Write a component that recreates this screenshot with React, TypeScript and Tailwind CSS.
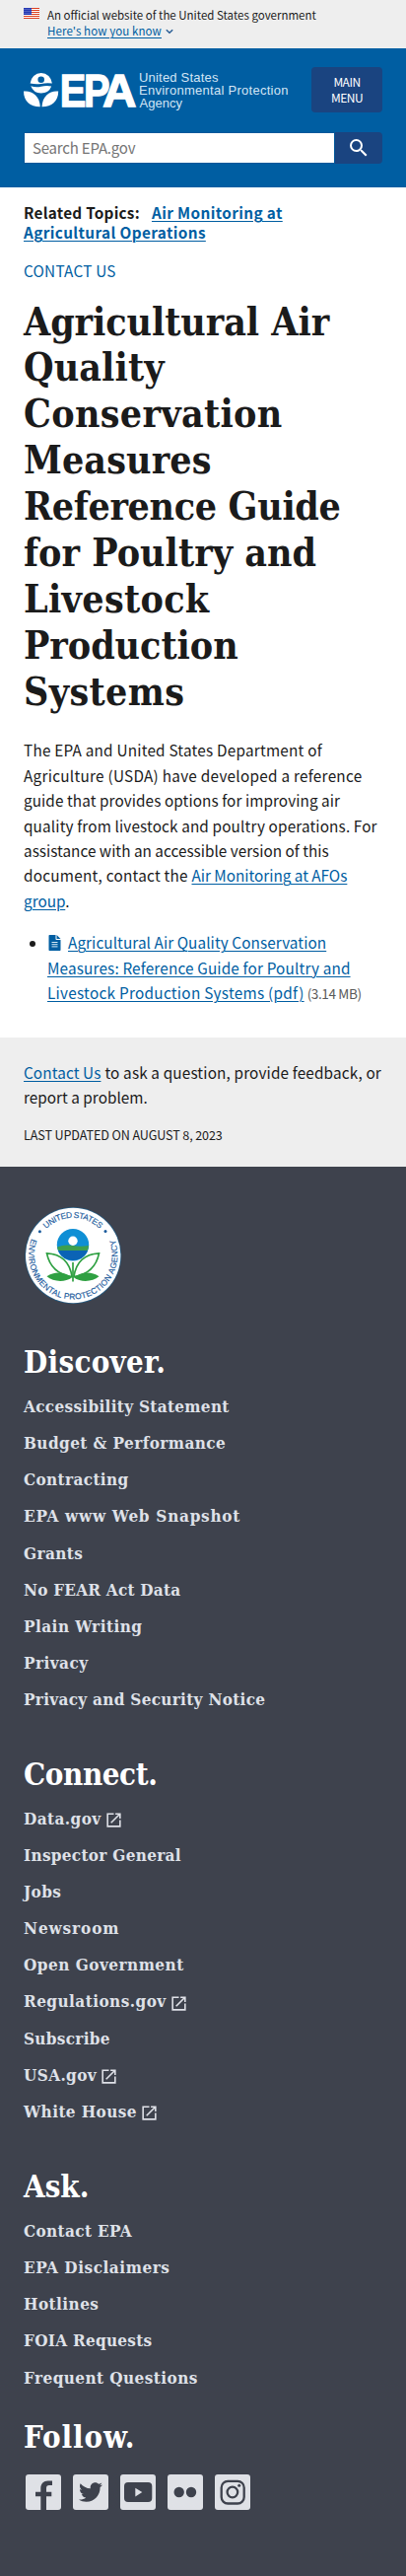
import type { ReactNode } from "react";
import { FaTwitter } from "react-icons/fa";

const link = "text-[#005ea2] underline decoration-1 underline-offset-[2px]";

function FlagIcon() {
  return (
    <svg width="16" height="11" viewBox="0 0 16 11" className="mt-px shrink-0">
      <rect width="16" height="11" fill="#fff" />
      {[0, 2, 4, 6, 8, 10].map((y) => (
        <rect key={y} y={y} width="16" height="1" fill="#db3e1f" />
      ))}
      <rect width="8" height="7" fill="#1e33b1" />
      {[1, 3, 5].map((y) =>
        [1, 3, 5, 7].map((x) => <circle key={`${x}-${y}`} cx={x} cy={y + 0.2} r="0.45" fill="#fff" />),
      )}
    </svg>
  );
}

function EpaLogo() {
  return (
    <svg width="270" height="41" viewBox="0 0 270 41" fill="#fff" className="mt-[4px] shrink-0 overflow-visible font-['Liberation_Sans',sans-serif]">
      <path d="M6.6 12.6a11.2 11.8 0 0 1 22.3 0q-5.600-.8-11.200.4q-5.500.8-11.100-.4z" />
      <circle cx="17.7" cy="8.700" r="3.300" fill="#005ea2" />
      <path d="M7.300 15.300q5 1.800 10.400.5q5.300-1.300 10.500-.3q-2.700 7-10.500 7.100q-7.700-.2-10.400-7.300z" />
      <path d="M0 20.500C8 19.500 16.300 24.500 16.800 36.300C7 36.500 0 31 0 20.500z" />
      <path d="M35.200 20.500C27.200 19.500 19 24.500 18.500 36.300C28 36.500 35.200 31 35.200 20.500z" />
      <g fontWeight="700" fontSize="47" stroke="#fff" strokeWidth="1.300">
        <text x="36.700" y="35.500" textLength="26.500" lengthAdjust="spacingAndGlyphs">E</text>
        <text x="61" y="35.500" textLength="26.500" lengthAdjust="spacingAndGlyphs">P</text>
        <text x="80" y="35.500" textLength="34.500" lengthAdjust="spacingAndGlyphs">A</text>
      </g>
      <g fontSize="13" fill="#d3e5f5">
        <text x="117" y="11" textLength="80.500">United States</text>
        <text x="117" y="23.800" textLength="151.500">Environmental Protection</text>
        <text x="117.500" y="36.700" textLength="43.500">Agency</text>
      </g>
    </svg>
  );
}

function FileIcon() {
  return (
    <svg width="13" height="16" viewBox="0 0 12 16" className="mr-[7px] ml-[1px] inline-block align-[-2px]">
      <path fill="#005ea2" d="M.700 0H7v4.300c0 .4.300.7.700.7H12v10.300c0 .4-.300.7-.700.7H.7a.7.7 0 0 1-.7-.7V.7C0 .3.300 0 .700 0zM8 0l4 4H8z" />
      <path stroke="#d6e8f6" strokeWidth="1" d="M3 7.500h6M3 9.700h6M3 11.900h6" />
    </svg>
  );
}

function ExternalIcon() {
  return (
    <svg width="19" height="19" viewBox="0 0 24 24" fill="currentColor" className="mt-[2px] ml-[3px]">
      <path d="M19 19H5V5h7V3H3v18h18v-9h-2v7zM14 3v2h3.590l-9.830 9.830 1.410 1.410L19 6.410V10h2V3h-7z" />
    </svg>
  );
}

function EpaSeal() {
  return (
    <svg width="100" height="100" viewBox="0 0 100 100" className="block font-['Liberation_Sans',sans-serif]">
      <defs>
        <path id="seal-top" d="M11.800 50a38.200 38.200 0 0 1 76.400 0" />
        <path id="seal-bottom" d="M8.700 31.800A45.100 45.100 0 1 0 91.700 31.800" />
      </defs>
      <circle cx="50.200" cy="50" r="49" fill="#25597f" />
      <circle cx="50.200" cy="50" r="48.200" fill="#fff" />
      <g fill="#1a5a9c" fontSize="8.400" stroke="#1a5a9c" strokeWidth="0.150">
        <text textAnchor="middle"><textPath href="#seal-top" startOffset="50%" textLength="60">UNITED STATES</textPath></text>
        <text><textPath href="#seal-bottom" startOffset="1.500" textLength="174">ENVIRONMENTAL PROTECTION AGENCY</textPath></text>
      </g>
      <circle cx="16.400" cy="25.700" r="1.500" fill="#1a5a9c" />
      <circle cx="83" cy="25.400" r="1.500" fill="#1a5a9c" />
      <circle cx="50" cy="39.300" r="16.200" fill="#0f8fd5" />
      <path d="M34 41.500q8-3 16-1.500t16 0a16.200 16.200 0 0 1-1.300 5H35.200a16 16 0 0 1-1.200-3.500z" fill="#3d9f4f" />
      <path d="M35 45h30a16.200 16.200 0 0 1-30 0z" fill="#0b63b5" />
      <circle cx="50" cy="35.300" r="4.700" fill="#fff" />
      <g stroke="#2fa042" strokeWidth="1.700" fill="none">
        <path d="M50 57v19.500" />
        <path d="M49 71.500C47 57 38 48.500 23.500 47.800C26 60 33 69 49 71.500z" />
        <path d="M51 71.500C53 57 62 48.500 76.500 47.800C74 60 67 69 51 71.500z" />
      </g>
      <path d="M23.500 71.300C32 65.500 42 67 49 72.500C42 77.500 30 77 23.500 71.300zM76.500 71.300C68 65.500 58 67 51 72.500C58 77.500 70 77 76.500 71.300z" fill="#2fa042" />
    </svg>
  );
}

function Social({ children }: { children: ReactNode }) {
  return (
    <a href="#" className="flex size-9 items-center justify-center overflow-hidden rounded-[3px] bg-[#dfe1e6] text-[#3e424d]">
      {children}
    </a>
  );
}

function Line({ className = "", children }: { className?: string; children: ReactNode }) {
  return <span className={`block whitespace-nowrap ${className}`}>{children}</span>;
}

type Item = { label: string; track: string; external?: boolean };

const discover: Item[] = [
  { label: "Accessibility Statement", track: "tracking-[0.31px]" },
  { label: "Budget & Performance", track: "tracking-[0.43px]" },
  { label: "Contracting", track: "tracking-[0.37px]" },
  { label: "EPA www Web Snapshot", track: "tracking-[0.74px]" },
  { label: "Grants", track: "tracking-[0.4px]" },
  { label: "No FEAR Act Data", track: "tracking-[0.24px]" },
  { label: "Plain Writing", track: "tracking-[0.46px]" },
  { label: "Privacy", track: "tracking-[0.45px]" },
  { label: "Privacy and Security Notice", track: "tracking-[0.3px]" },
];

const connect: Item[] = [
  { label: "Data.gov", track: "tracking-[0.42px]", external: true },
  { label: "Inspector General", track: "tracking-[0.31px]" },
  { label: "Jobs", track: "tracking-[0.35px]" },
  { label: "Newsroom", track: "tracking-[0.9px]" },
  { label: "Open Government", track: "tracking-[0.49px]" },
  { label: "Regulations.gov", track: "tracking-[0.45px]", external: true },
  { label: "Subscribe", track: "tracking-[0.3px]" },
  { label: "USA.gov", track: "tracking-[0.38px]", external: true },
  { label: "White House", track: "tracking-[0.42px]", external: true },
];

const ask: Item[] = [
  { label: "Contact EPA", track: "tracking-[0.36px]" },
  { label: "EPA Disclaimers", track: "tracking-[0.55px]" },
  { label: "Hotlines", track: "tracking-[0.45px]" },
  { label: "FOIA Requests", track: "tracking-[0.28px]" },
  { label: "Frequent Questions", track: "tracking-[0.43px]" },
];

function FooterMenu({ title, track, items, className }: { title: string; track: string; items: Item[]; className: string }) {
  return (
    <section className={className}>
      <h2 className={`text-[31px] leading-[40px] font-bold text-white ${track}`}>{title}</h2>
      <ul className="mt-[7px]">
        {items.map((it) => (
          <li key={it.label} className="flex h-[37.15px] items-center text-[17px] leading-[37.15px] font-bold text-[#dfe1e8]">
            <a href="#" className={it.track}>{it.label}</a>
            {it.external && <ExternalIcon />}
          </li>
        ))}
      </ul>
    </section>
  );
}

export default function App() {
  return (
    <div className="w-[412px] bg-white font-['Noto_Sans_CJK_SC',sans-serif] text-[15.3px] text-[#1b1b1b]">
      <div className="flex h-[49px] gap-2 bg-[#eeeeee] px-6 pt-[7px] text-[11.5px] leading-4">
        <FlagIcon />
        <div>
          <Line>An official website of the United States government</Line>
          <div className="flex items-center">
            <a href="#" className={`${link} whitespace-nowrap tracking-[0.1px]`}>Here's how you know</a>
            <svg width="8" height="6" viewBox="0 0 8 6" className="mt-[2px] ml-[4px]" fill="none" stroke="#2b5f96" strokeWidth="1.500">
              <path d="M.800 1.200L4 4.200L7.200 1.200" />
            </svg>
          </div>
        </div>
      </div>

      <header className="h-[141px] bg-[#005ea2] px-6 pt-[19px]">
        <div className="flex justify-between">
          <EpaLogo />
          <button className="h-[46px] w-[72px] rounded-[4px] bg-[#1a4480] text-center text-[12px] leading-4 tracking-[-0.5px] text-white">
            MAIN
            <br />
            MENU
          </button>
        </div>
        <div className="mt-5 flex h-8">
          <div className="flex flex-1 items-center border border-[#00589a] bg-white px-2 text-[15px] tracking-[-0.2px] text-[#757575]">
            Search EPA.gov
          </div>
          <button className="flex w-12 items-center justify-center rounded-r-[4px] bg-[#1a4480]">
            <svg width="24" height="24" viewBox="0 0 24 24" fill="#fff">
              <path d="M15.500 14h-.790l-.280-.270A6.471 6.471 0 0 0 16 9.500 6.500 6.500 0 1 0 9.500 16c1.610 0 3.090-.590 4.230-1.570l.270.280v.790l5 4.990L20.490 19l-4.990-5zm-6 0C7.010 14 5 11.990 5 9.500S7.010 5 9.500 5 14 7.010 14 9.500 11.990 14 9.500 14z" />
            </svg>
          </button>
        </div>
      </header>

      <main className="h-[862px] px-6 pt-[15px]">
        <div className="leading-5 font-bold">
          <Line>
            <span className="mr-[12px] tracking-[0.26px]">Related Topics:</span>
            <a href="#" className={`${link} tracking-[0.38px]`}>Air Monitoring at</a>
          </Line>
          <Line>
            <a href="#" className={`${link} tracking-[0.38px]`}>Agricultural Operations</a>
          </Line>
        </div>
        <a href="#" className="mt-[17px] block leading-6 tracking-[0.24px] text-[#005ea2]">CONTACT US</a>
        <h1 className="mt-[16.5px] font-['DejaVu_Serif_Condensed','DejaVu_Serif',serif] text-[39px] leading-[46.87px] font-bold">
          <Line className="tracking-[-0.08px]">Agricultural Air</Line>
          <Line className="tracking-[0.1px]">Quality</Line>
          <Line className="tracking-[0.3px]">Conservation</Line>
          <Line className="tracking-[0.1px]">Measures</Line>
          <Line className="tracking-[-0.35px]">Reference Guide</Line>
          <Line className="tracking-[0.02px]">for Poultry and</Line>
          <Line className="tracking-[0.3px]">Livestock</Line>
          <Line className="tracking-[-0.05px]">Production</Line>
          <Line className="tracking-[0.35px]">Systems</Line>
        </h1>
        <p className="mt-[24px] leading-[25.4px]">
          <Line className="tracking-[0.22px]">The EPA and United States Department of</Line>
          <Line className="tracking-[0.27px]">Agriculture (USDA) have developed a reference</Line>
          <Line className="tracking-[0.08px]">guide that provides options for improving air</Line>
          <Line className="tracking-[0.14px]">quality from livestock and poultry operations. For</Line>
          <Line className="tracking-[0.02px]">assistance with an accessible version of this</Line>
          <Line>
            <span className="tracking-[0.24px]">document, contact the </span>
            <a href="#" className={`${link} tracking-[-0.01px]`}>Air Monitoring at AFOs</a>
          </Line>
          <Line>
            <a href="#" className={link}>group</a>.
          </Line>
        </p>
        <div className="mt-[17px] flex leading-[25.4px]">
          <span className="mt-[11px] ml-[6px] size-[6px] shrink-0 rounded-full bg-[#1b1b1b]" />
          <div className="ml-[12px]">
            <Line>
              <FileIcon />
              <a href="#" className={`${link} tracking-[0.08px]`}>Agricultural Air Quality Conservation</a>
            </Line>
            <Line>
              <a href="#" className={`${link} tracking-[0.16px]`}>Measures: Reference Guide for Poultry and</a>
            </Line>
            <Line>
              <a href="#" className={`${link} mr-[3px] tracking-[0.28px]`}>Livestock Production Systems (pdf)</a>
              <span className="text-[13.6px] tracking-[-0.4px] text-[#5a5a5a]">(3.14 MB)</span>
            </Line>
          </div>
        </div>
      </main>

      <div className="h-[131px] bg-[#eeeeee] px-6 pt-[22.7px] leading-[25.4px]">
        <Line>
          <a href="#" className={`${link} mr-[4px] tracking-[0.11px]`}>Contact Us</a>
          <span className="tracking-[0.15px]">to ask a question, provide feedback, or</span>
        </Line>
        <Line className="tracking-[0.02px]">report a problem.</Line>
        <p className="mt-[15px] text-[12.6px] leading-5 tracking-[-0.12px]">LAST UPDATED ON AUGUST 8, 2023</p>
      </div>

      <footer className="h-[1429px] bg-[#3e424d] px-6 pt-10 font-['DejaVu_Serif_Condensed','DejaVu_Serif',serif]">
        <EpaSeal />
        <FooterMenu className="mt-[38px]" title="Discover." track="tracking-[0.3px]" items={discover} />
        <FooterMenu className="mt-[36.5px]" title="Connect." track="tracking-[-0.4px]" items={connect} />
        <FooterMenu className="mt-[37px]" title="Ask." track="tracking-[0px]" items={ask} />
        <h2 className="mt-[21.5px] text-[31px] leading-[40px] font-bold tracking-[0.9px] text-white">Follow.</h2>
        <div className="mt-[18px] ml-[2px] flex gap-3">
          <Social>
            <svg width="36" height="36" fill="currentColor">
              <path d="M15.300 36V22.300H10v-4.600h5.300v-3.400c0-5 3-7.800 7.300-7.800H27v4.600h-3c-2.200 0-3 1.100-3 3v3.600h5.300v4.600H21V36z" />
            </svg>
          </Social>
          <Social>
            <FaTwitter size={24} />
          </Social>
          <Social>
            <svg width="36" height="36" fill="currentColor">
              <rect x="4" y="8" width="28.300" height="20" rx="4" />
              <path d="M15.300 13.800v8.600l7-4.300z" fill="#dfe1e6" />
            </svg>
          </Social>
          <Social>
            <svg width="36" height="36" fill="currentColor">
              <circle cx="11.700" cy="18" r="5.200" />
              <circle cx="24" cy="18" r="5.200" />
            </svg>
          </Social>
          <Social>
            <svg width="36" height="36" fill="none" stroke="currentColor" strokeWidth="2.300">
              <rect x="6.700" y="6.900" width="23" height="22.600" rx="6.500" />
              <circle cx="17.900" cy="18" r="5.300" />
              <circle cx="24.700" cy="11.300" r="1.500" fill="currentColor" stroke="none" />
            </svg>
          </Social>
        </div>
      </footer>
    </div>
  );
}
